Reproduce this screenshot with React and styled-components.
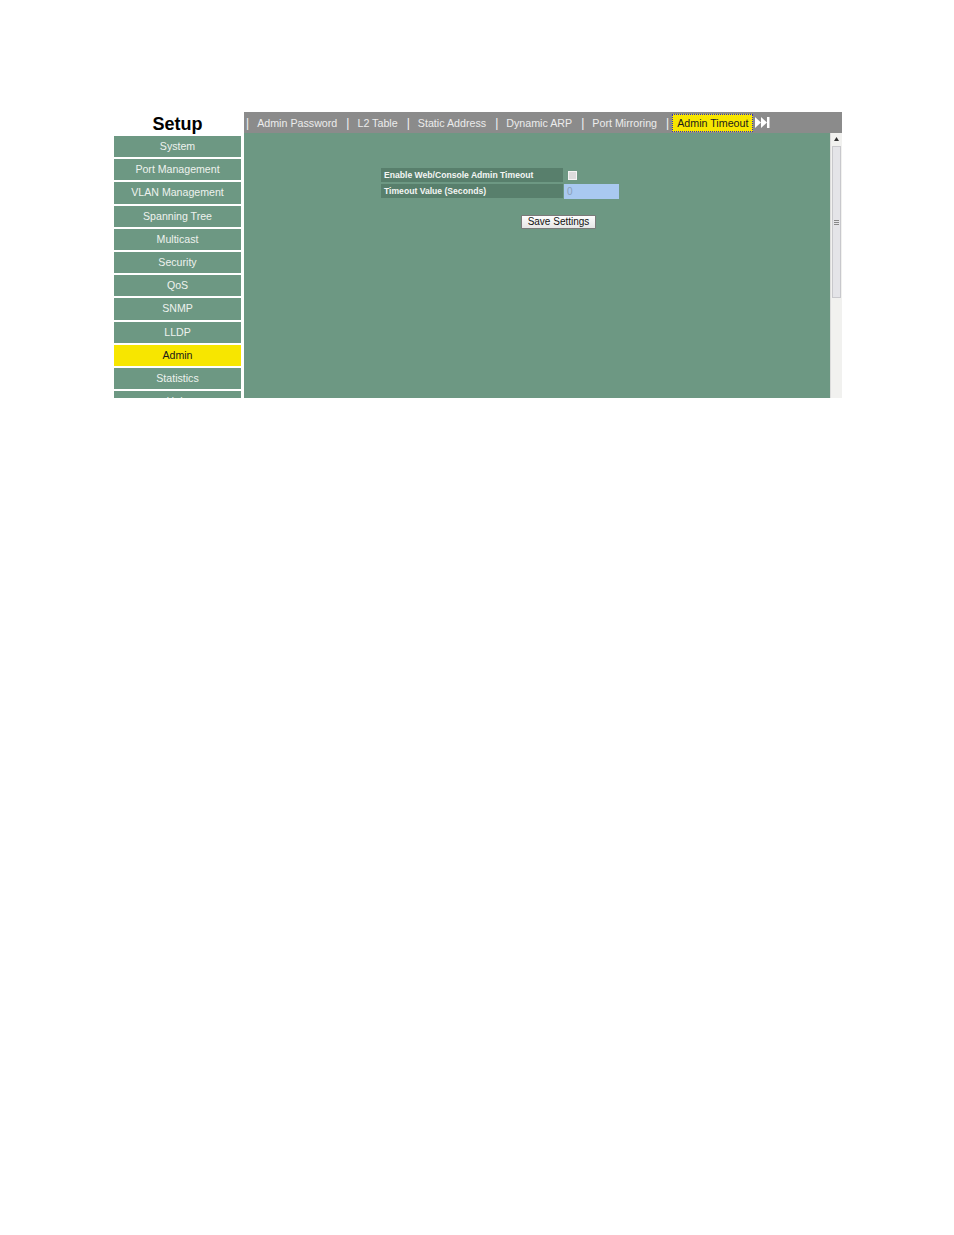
import React from "react";
import styled, { createGlobalStyle } from "styled-components";

const Global = createGlobalStyle`
  body {
    margin: 0;
    background: #ffffff;
    font-family: "Liberation Sans", Arial, sans-serif;
  }
`;

const MENU = [
  "System",
  "Port Management",
  "VLAN Management",
  "Spanning Tree",
  "Multicast",
  "Security",
  "QoS",
  "SNMP",
  "LLDP",
  "Admin",
  "Statistics",
  "Help",
];

const TABS = [
  "Admin Password",
  "L2 Table",
  "Static Address",
  "Dynamic ARP",
  "Port Mirroring",
];

const Page = styled.div`
  padding: 112px 0 0 114px;
`;

const Frame = styled.div`
  display: flex;
  gap: 3px;
  width: 728px;
  height: 286px;
  overflow: hidden;
`;

const Sidebar = styled.div`
  width: 127px;
  flex: none;
  display: flex;
  flex-direction: column;
  gap: 2.1px;
`;

const Title = styled.div`
  height: 22px;
  text-align: center;
  font-size: 18px;
  font-weight: bold;
  color: #000;
  line-height: 24px;
`;

const MenuItem = styled.div`
  flex: none;
  height: 21.1px;
  line-height: 21px;
  text-align: center;
  font-size: 10.6px;
  color: ${(p) => (p.$active ? "#1a1a1a" : "#eef2ee")};
  background: ${(p) => (p.$active ? "#f7e600" : "#6d9883")};
`;

const Main = styled.div`
  flex: 1;
  display: flex;
  flex-direction: column;
`;

const TabBar = styled.div`
  height: 21px;
  background: #8b8b8b;
  display: flex;
  align-items: center;
  padding-left: 2px;
  font-size: 10.7px;
  color: #ececec;
`;

const Sep = styled.span`
  color: #f4f4f4;
  font-size: 12px;
`;

const Tab = styled.span`
  padding: 0 9px 0 8px;
  white-space: nowrap;
`;

const ActiveTab = styled.span`
  margin-left: 3px;
  padding: 1px 5px;
  background: #f7e600;
  color: #1a1a1a;
  outline: 1px dotted #2a2ad0;
  outline-offset: -1px;
  white-space: nowrap;
  line-height: 16px;
`;

const SkipIcon = styled.svg`
  margin-left: 2px;
`;

const Body = styled.div`
  flex: 1;
  display: flex;
`;

const Content = styled.div`
  flex: 1;
  background: #6d9883;
  padding: 35px 0 0 137px;
`;

const Form = styled.div`
  display: grid;
  grid-template-columns: 182px 55px;
  column-gap: 1px;
  row-gap: 2px;
  width: 238px;
`;

const Label = styled.div`
  height: 14px;
  line-height: 14px;
  padding-left: 3px;
  background: #587f6c;
  color: #f4f6f4;
  font-size: 8.6px;
  font-weight: bold;
  white-space: nowrap;
`;

const Cell = styled.div`
  display: flex;
  align-items: center;
  height: ${(p) => p.$h || 14}px;
`;

const Check = styled.span`
  width: 7px;
  height: 7px;
  margin-left: 4px;
  background: #dcdcdc;
  border: 1px solid #f4f4f4;
`;

const Input = styled.div`
  width: 100%;
  height: 15px;
  background: #a9c9f0;
  color: #8aa0b8;
  font-size: 10px;
  line-height: 15px;
  padding-left: 3px;
  box-sizing: border-box;
`;

const ButtonRow = styled.div`
  padding: 12px 0 0 140px;
`;

const Button = styled.button`
  width: 75px;
  height: 14px;
  padding: 0;
  font-family: "Liberation Sans", Arial, sans-serif;
  font-size: 10px;
  line-height: 12px;
  color: #111;
  background: linear-gradient(#fdfdfd, #e6e6e6);
  border: 1px solid #7a7a7a;
  border-radius: 1px;
`;

const Scrollbar = styled.div`
  width: 12px;
  flex: none;
  background: #f1f1ef;
  border-left: 1px solid #dcdcdc;
  display: flex;
  flex-direction: column;
  align-items: center;
  box-sizing: border-box;
`;

const Arrow = styled.div`
  height: 12px;
  display: flex;
  align-items: center;
  justify-content: center;
`;

const Thumb = styled.div`
  width: 9px;
  height: 152px;
  margin-top: 1px;
  background: #e4e4e8;
  border: 1px solid #c8c8cc;
  box-sizing: border-box;
  display: flex;
  align-items: center;
  justify-content: center;
`;

export default function App() {
  return (
    <Page>
      <Global />
      <Frame>
        <Sidebar>
          <Title>Setup</Title>
          {MENU.map((m) => (
            <MenuItem key={m} $active={m === "Admin"}>
              {m}
            </MenuItem>
          ))}
        </Sidebar>
        <Main>
          <TabBar>
            {TABS.map((t) => (
              <React.Fragment key={t}>
                <Sep>|</Sep>
                <Tab>{t}</Tab>
              </React.Fragment>
            ))}
            <Sep>|</Sep>
            <ActiveTab>Admin Timeout</ActiveTab>
            <SkipIcon width="15" height="11" viewBox="0 0 15 11">
              <path d="M0 0 L6 5.5 L0 11 Z M6 0 L12 5.5 L6 11 Z" fill="#ffffff" />
              <rect x="12" y="0" width="2.5" height="11" fill="#ffffff" />
            </SkipIcon>
          </TabBar>
          <Body>
            <Content>
              <Form>
                <Label>Enable Web/Console Admin Timeout</Label>
                <Cell>
                  <Check />
                </Cell>
                <Label>Timeout Value (Seconds)</Label>
                <Cell $h={15}>
                  <Input>0</Input>
                </Cell>
              </Form>
              <ButtonRow>
                <Button>Save Settings</Button>
              </ButtonRow>
            </Content>
            <Scrollbar>
              <Arrow>
                <svg width="5" height="4" viewBox="0 0 5 4">
                  <path d="M2.5 0 L5 4 L0 4 Z" fill="#333" />
                </svg>
              </Arrow>
              <Thumb>
                <svg width="5" height="5" viewBox="0 0 5 5">
                  <path d="M0 0.5 H5 M0 2.5 H5 M0 4.5 H5" stroke="#888" strokeWidth="1" />
                </svg>
              </Thumb>
            </Scrollbar>
          </Body>
        </Main>
      </Frame>
    </Page>
  );
}
